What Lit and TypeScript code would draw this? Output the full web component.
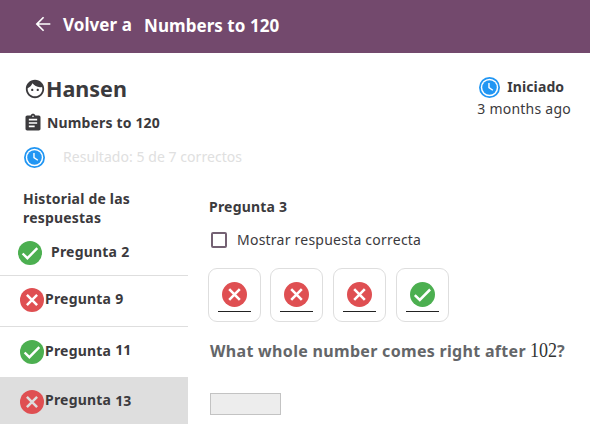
import { LitElement, html, css, svg } from "lit";
import { customElement, property } from "lit/decorators.js";
import { classMap } from "lit/directives/class-map.js";

const shapes: Record<string, unknown> = {
  back: svg`<path fill="#fff" d="M20 11.1H7.4l5.9-5.8L12 4l-8 8 8 8 1.3-1.3-5.9-5.8H20z"/>`,
  face: svg`<path fill="#3b3a3d" d="M9 11.75c-.69 0-1.25.56-1.25 1.25s.56 1.25 1.25 1.25 1.25-.56 1.25-1.25-.56-1.25-1.25-1.25zm6 0c-.69 0-1.25.56-1.25 1.25s.56 1.25 1.25 1.25 1.25-.56 1.25-1.25-.56-1.25-1.25-1.25zM12 2C6.48 2 2 6.48 2 12s4.48 10 10 10 10-4.48 10-10S17.52 2 12 2zm0 18c-4.41 0-8-3.59-8-8 0-.29.02-.58.05-.86 2.36-1.05 4.23-2.98 5.21-5.37C11.07 8.33 14.05 10 17.42 10c.78 0 1.53-.09 2.25-.26.21.71.33 1.47.33 2.26 0 4.41-3.59 8-8 8z"/>`,
  assignment: svg`<path fill="#3b3a3d" d="M19 3h-4.18C14.4 1.84 13.3 1 12 1c-1.3 0-2.4.84-2.82 2H5c-1.1 0-2 .9-2 2v14c0 1.1.9 2 2 2h14c1.1 0 2-.9 2-2V5c0-1.1-.9-2-2-2zm-7 0c.55 0 1 .45 1 1s-.45 1-1 1-1-.45-1-1 .45-1 1-1zm2 14H7v-2h7v2zm3-4H7v-2h10v2zm0-4H7V7h10v2z"/>`,
  clock: svg`<circle cx="12" cy="12" r="11" fill="none" stroke="#2196f3" stroke-width="2"/><circle cx="12" cy="12" r="8.3" fill="#2196f3"/><path d="M11.4 6.8v5.4l4.4 2.9" fill="none" stroke="#fff" stroke-width="1.6"/>`,
  right: svg`<circle cx="12" cy="12" r="12" fill="#4caf50"/><path d="M4.6 12.5l4.8 4.7 9.9-10" fill="none" stroke="#fff" stroke-width="2.4"/>`,
  wrong: svg`<circle cx="12" cy="12" r="12" fill="#df4f52"/><path d="M6.9 6.9l10.2 10.2M17.1 6.9L6.9 17.1" fill="none" stroke="var(--mark, #fff)" stroke-width="2.5"/>`,
};

@customElement("ui-icon")
export class UiIcon extends LitElement {
  @property() name = "";
  static styles = css`
    :host { display: block; flex: none; width: 24px; height: 24px; }
    svg { display: block; width: 100%; height: 100%; overflow: visible; }
  `;
  render() {
    return html`<svg viewBox="0 0 24 24">${shapes[this.name]}</svg>`;
  }
}

interface Entry { n: number; ok: boolean; cls: string }

const history: Entry[] = [
  { n: 2, ok: true, cls: "first" },
  { n: 9, ok: false, cls: "second" },
  { n: 11, ok: true, cls: "third" },
  { n: 13, ok: false, cls: "current" },
];

@customElement("app-root")
export class AppRoot extends LitElement {
  static styles = css`
    :host {
      display: block; width: 590px; height: 440px; overflow: hidden;
      background: #fff; color: #3b3a3d;
      font: 14px/20px "Noto Sans", sans-serif;
      white-space: nowrap;
    }
    header {
      display: flex; height: 53px; box-sizing: border-box; padding: 13px 0 0 32px;
      background: #73496d; color: #fff; font-size: 17px; line-height: 24px; font-weight: 700;
    }
    .back { width: 22px; height: 22px; }
    .to { margin-left: 9px; width: 81px; letter-spacing: 0.05px; }
    .name { margin-top: 1px; letter-spacing: 0.06px; }
    .top { display: flex; justify-content: space-between; height: 133px; box-sizing: border-box; padding: 22px 19px 0 23px; }
    .line { display: flex; align-items: center; font-weight: 700; }
    .student { font-size: 21.5px; height: 28px; }
    .student ui-icon { width: 22px; height: 22px; margin: 0 0 0 1px; }
    .quiz { height: 20px; margin-top: 10px; letter-spacing: 0.15px; }
    .quiz ui-icon { width: 20px; height: 20px; margin-right: 4px; }
    .result { height: 22px; margin-top: 13px; font-weight: 400; color: #e0e0e0; letter-spacing: 0.05px; }
    .clock { width: 21px; height: 21px; }
    .result .clock { margin-right: 18px; margin-left: 1px; }
    .status { height: 22px; margin-top: 1px; padding-left: 2px; letter-spacing: 0.1px; }
    .status .clock { margin-right: 7px; }
    .ago { margin-top: 1px; letter-spacing: 0.24px; }
    .main { display: flex; }
    nav { width: 188px; font-weight: 700; }
    h2 { margin: 3px 0 0 23px; font-size: 14px; line-height: 19px; letter-spacing: 0.2px; }
    .entry { display: flex; align-items: center; box-sizing: border-box; padding-left: 20px; border-bottom: 1px solid #dedede; letter-spacing: 0.2px; }
    .entry ui-icon { margin-right: 1px; --mark: #fff; }
    .num { margin-left: 4px; }
    .first { height: 49px; padding-left: 18px; }
    .first ui-icon { margin: 4px 9px 0 0; }
    .first .word, .first .num { margin-top: 2px; }
    .second { height: 51px; padding-bottom: 4px; }
    .second ui-icon { margin-top: 2px; }
    .third { height: 50px; border-bottom: 0; padding-bottom: 2px; }
    .third ui-icon { margin-top: 1px; }
    .third .num { position: relative; top: -1px; }
    .current { height: 47px; border: 0; background: #dedede; padding-bottom: 2px; }
    .current ui-icon { margin-top: 4px; --mark: #dedede; }
    .current .num { position: relative; top: 1px; }
    section { padding: 11px 0 0 20px; }
    .question { font-weight: 700; padding-left: 1px; letter-spacing: 0.2px; }
    .check { display: flex; align-items: center; margin: 13px 0 0 3px; }
    .label { letter-spacing: 0.23px; }
    .box { width: 16px; height: 16px; box-sizing: border-box; border: 2px solid #746173; border-radius: 2px; margin-right: 10px; }
    .cards { display: flex; gap: 10px; margin-top: 18px; }
    .card { width: 53px; height: 54px; box-sizing: border-box; border: 1px solid #dedede; border-radius: 9px; display: flex; flex-direction: column; align-items: center; padding-top: 13px; }
    .card:first-child { margin-right: -1px; }
    .card ui-icon { width: 25px; height: 25px; }
    .rule { width: 33px; height: 1px; background: #222; margin-top: 4px; }
    .prompt { display: flex; margin: 17px 0 0 2px; font-size: 16px; line-height: 24px; font-weight: 700; color: #646669; }
    .ask { letter-spacing: 0.31px; }
    .math { font: 400 20.5px/24px "Liberation Serif", serif; color: #333; width: 27px; margin: -1px 0 1px 4px; transform: scaleX(0.88); transform-origin: left; }
    .answer { width: 71px; height: 22px; box-sizing: border-box; border: 1px solid #c3c3c3; background: #ededed; margin: 30px 0 0 2px; }
  `;

  render() {
    return html`
      <header>
        <ui-icon class="back" name="back"></ui-icon>
        <span class="to">Volver a</span><span class="name">Numbers to 120</span>
      </header>
      <div class="top">
        <div>
          <div class="line student"><ui-icon name="face"></ui-icon><span>Hansen</span></div>
          <div class="line quiz"><ui-icon name="assignment"></ui-icon><span>Numbers to 120</span></div>
          <div class="line result"><ui-icon class="clock" name="clock"></ui-icon><span>Resultado: 5 de 7 correctos</span></div>
        </div>
        <div>
          <div class="line status"><ui-icon class="clock" name="clock"></ui-icon><span>Iniciado</span></div>
          <div class="ago">3 months ago</div>
        </div>
      </div>
      <div class="main">
        <nav>
          <h2>Historial de las<br />respuestas</h2>
          ${history.map((e) => html`
            <div class=${classMap({ entry: true, [e.cls]: true })}>
              <ui-icon name=${e.ok ? "right" : "wrong"}></ui-icon><span class="word">Pregunta</span><span class="num">${e.n}</span>
            </div>`)}
        </nav>
        <section>
          <div class="question">Pregunta 3</div>
          <div class="check"><span class="box"></span><span class="label">Mostrar respuesta correcta</span></div>
          <div class="cards">
            ${[false, false, false, true].map((ok) => html`
              <div class="card"><ui-icon name=${ok ? "right" : "wrong"}></ui-icon><div class="rule"></div></div>`)}
          </div>
          <div class="prompt"><span class="ask">What whole number comes right after</span><span class="math">102</span><span>?</span></div>
          <div class="answer"></div>
        </section>
      </div>
    `;
  }
}
